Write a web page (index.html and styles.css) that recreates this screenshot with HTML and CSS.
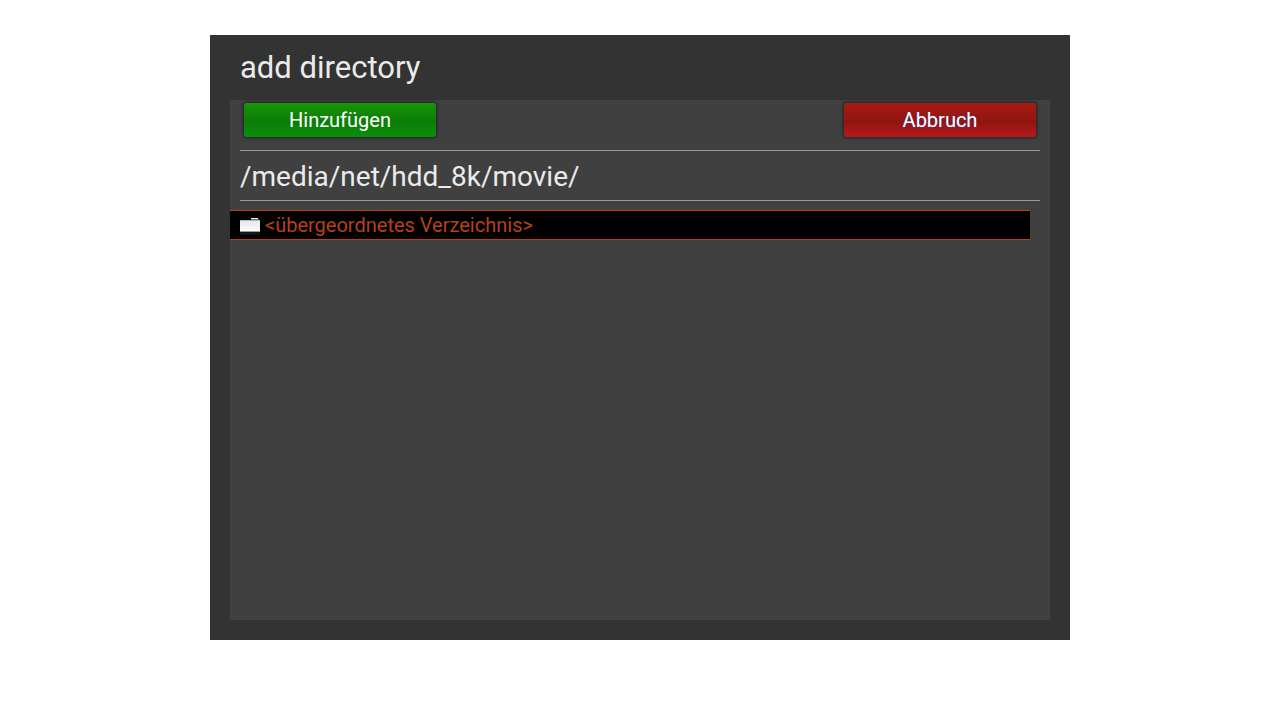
FILE: index.html
```html
<!DOCTYPE html>
<html lang="de">
<head>
    <meta charset="UTF-8">
    <meta name="viewport" content="width=device-width, initial-scale=1.0">
    <title>add directory</title>
    <link rel="stylesheet" href="styles.css">
</head>
<body>
    <main class="window">
        <h1 class="title">add directory</h1>
        <div class="panel">
            <div class="buttons">
                <button type="button" class="button green">Hinzufügen</button>
                <button type="button" class="button red">Abbruch</button>
            </div>
            <div class="path">/media/net/hdd_8k/movie/</div>
            <ul class="list">
                <li>
                    <a href="#" class="entry selected">
                        <svg class="folder" viewBox="0 0 20 20" shape-rendering="crispEdges" aria-hidden="true">
                            <defs>
                                <linearGradient id="folderFill" x1="0" y1="0" x2="0" y2="1">
                                    <stop offset="0" stop-color="#e8e8e8"/>
                                    <stop offset="0.400" stop-color="#f0f0f4"/>
                                    <stop offset="1" stop-color="#fafafa"/>
                                </linearGradient>
                            </defs>
                            <path d="M11 3h7v1h-7z" fill="#f0f4ec"/>
                            <path d="M11 4h8v1h-8z" fill="#6c706a"/>
                            <path d="M0 5h20v1H0z" fill="#b8b8b8"/>
                            <path d="M0 6h20v10H0z" fill="url(#folderFill)"/>
                            <path d="M0 16h20v1H0z" fill="#9a9a9a"/>
                            <path d="M0 17h20v3H0z" fill="#141414"/>
                        </svg>
                        <span>&lt;übergeordnetes Verzeichnis&gt;</span>
                    </a>
                </li>
            </ul>
        </div>
    </main>
</body>
</html>
```
FILE: styles.css
```css
* {
    box-sizing: border-box;
}
body {
    font-family: Roboto, "Liberation Sans", sans-serif;
    margin: 0;
    padding: 35px 20px;
    background-color: #fff;
    color: #ebebeb;
}
.window {
    max-width: 860px;
    margin: 0 auto;
    padding: 0 20px 20px;
    background-color: #333;
}
.title {
    margin: 0;
    padding: 0 10px;
    font-size: 31px;
    font-weight: 400;
    line-height: 65px;
}
.panel {
    min-height: 520px;
    background-color: #404040;
}
.buttons {
    display: flex;
    justify-content: space-between;
    padding: 3px 14px 13px;
}
.button {
    width: 192px;
    height: 34px;
    padding: 0;
    border: none;
    border-radius: 3px;
    box-shadow: 0 0 3px 1px #222;
    font-family: inherit;
    font-size: 20px;
    line-height: 34px;
    color: #fff;
    cursor: pointer;
}
.green {
    background: linear-gradient(#189608, #0c7c08 55%, #0a900c);
}
.red {
    background: linear-gradient(#a81c10, #901510 55%, #b8181c);
    text-shadow: 0 0 1px #3c50e0;
}
.path {
    margin: 0 10px;
    padding-top: 2px;
    border-top: 1px solid #999;
    border-bottom: 1px solid #999;
    font-size: 28px;
    line-height: 47px;
}
.list {
    list-style: none;
    margin: 9px 20px 0 0;
    padding: 0;
}
.entry {
    display: flex;
    align-items: center;
    gap: 5px;
    padding: 0 10px;
    font-size: 20px;
    line-height: 28px;
    color: #b4411c;
    text-decoration: none;
}
.selected {
    background-color: #000;
    border-top: 1px solid #c03c14;
    border-bottom: 1px solid #c03c14;
}
.folder {
    width: 20px;
    height: 20px;
}
```
